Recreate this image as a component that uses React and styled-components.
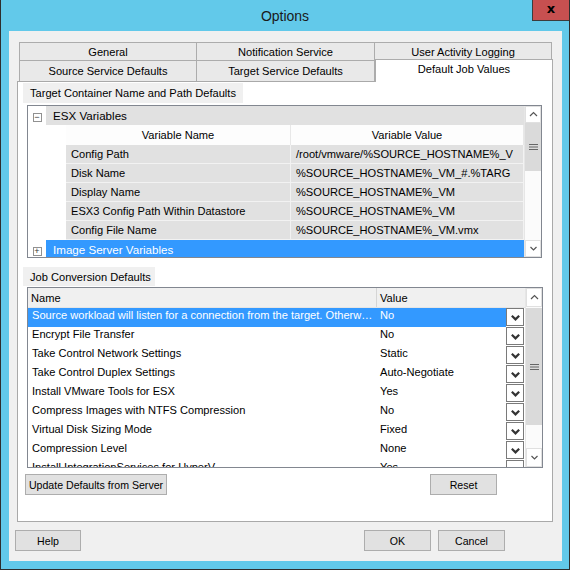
import React from "react";
import styled, { createGlobalStyle } from "styled-components";

const GlobalStyle = createGlobalStyle`
  body {
    margin: 0;
    font-family: "Liberation Sans", Arial, sans-serif;
    font-size: 11.1px;
    color: #000;
  }
  * {
    box-sizing: border-box;
  }
`;

const treeRows = [
  ["Config Path", "/root/vmware/%SOURCE_HOSTNAME%_V"],
  ["Disk Name", "%SOURCE_HOSTNAME%_VM_#.%TARG"],
  ["Display Name", "%SOURCE_HOSTNAME%_VM"],
  ["ESX3 Config Path Within Datastore", "%SOURCE_HOSTNAME%_VM"],
  ["Config File Name", "%SOURCE_HOSTNAME%_VM.vmx"],
];

const jobRows = [
  ["Source workload will listen for a connection from the target. Otherwise the target will connect", "No", true],
  ["Encrypt File Transfer", "No"],
  ["Take Control Network Settings", "Static"],
  ["Take Control Duplex Settings", "Auto-Negotiate"],
  ["Install VMware Tools for ESX", "Yes"],
  ["Compress Images with NTFS Compression", "No"],
  ["Virtual Disk Sizing Mode", "Fixed"],
  ["Compression Level", "None"],
  ["Install IntegrationServices for HyperV", "Yes"],
];

const Chevron = ({ up, size = 9, heavy }) => (
  <svg width={size} height={size} viewBox="0 0 9 9">
    <polyline
      points={up ? "1,6 4.5,2.5 8,6" : "1.5,3 4.5,6 7.5,3"}
      fill="none"
      stroke={heavy ? "#333" : "#555"}
      strokeWidth={heavy ? "1.8" : "1.2"}
    />
  </svg>
);

const Grip = () => (
  <svg width="9" height="8" viewBox="0 0 9 8">
    <path d="M0 1.5h9M0 4h9M0 6.5h9" stroke="#666" strokeWidth="1.2" />
  </svg>
);

function ScrollBar({ arrow, thumbTop, thumb }) {
  return (
    <Scroll>
      <ArrowBox h={arrow}>
        <Chevron up />
      </ArrowBox>
      <Thumb style={{ marginTop: thumbTop, height: thumb }}>
        <Grip />
      </Thumb>
      <Track />
      <ArrowBox h={arrow}>
        <Chevron />
      </ArrowBox>
    </Scroll>
  );
}

function App() {
  return (
    <>
      <GlobalStyle />
      <Window>
        <TitleBar>
          <Title>Options</Title>
          <CloseButton>x</CloseButton>
        </TitleBar>
        <Client>
          <TabArea>
            <TabRow>
              <Tab first>General</Tab>
              <Tab>Notification Service</Tab>
              <Tab>User Activity Logging</Tab>
            </TabRow>
            <TabRow lower>
              <Tab first lower>Source Service Defaults</Tab>
              <Tab lower>Target Service Defaults</Tab>
              <ActiveTab>Default Job Values</ActiveTab>
            </TabRow>
            <Panel>
              <GroupLabel w={220}>Target Container Name and Path Defaults</GroupLabel>
              <TreeGrid>
                <TreeBody>
                  <GroupRow>
                    <Expander>
                      <ExpandBox>−</ExpandBox>
                    </Expander>
                    <GroupBar>ESX Variables</GroupBar>
                  </GroupRow>
                  <VarTable>
                    <VarHeader>
                      <VarHeadCell w={225}>Variable Name</VarHeadCell>
                      <VarHeadCell>Variable Value</VarHeadCell>
                    </VarHeader>
                    {treeRows.map(([name, value]) => (
                      <VarRow key={name}>
                        <VarCell w={225}>{name}</VarCell>
                        <VarCell>{value}</VarCell>
                      </VarRow>
                    ))}
                  </VarTable>
                  <GroupRow>
                    <Expander>
                      <ExpandBox>+</ExpandBox>
                    </Expander>
                    <GroupBar selected>Image Server Variables</GroupBar>
                  </GroupRow>
                </TreeBody>
                <ScrollBar arrow={17} thumbTop={0} thumb={48} />
              </TreeGrid>

              <GroupLabel w={132} spaced>Job Conversion Defaults</GroupLabel>
              <JobGrid>
                <JobBody>
                  <JobHeader>
                    <JobHeadCell w={349}>Name</JobHeadCell>
                    <JobHeadCell>Value</JobHeadCell>
                  </JobHeader>
                  <JobRows>
                    {jobRows.map(([name, value, selected]) => (
                      <JobRow key={name} selected={selected}>
                        <NameCell>{name}</NameCell>
                        <ValueCell>{value}</ValueCell>
                        <DropButton>
                          <Chevron size={11} heavy />
                        </DropButton>
                      </JobRow>
                    ))}
                  </JobRows>
                </JobBody>
                <ScrollBar arrow={19} thumbTop={1} thumb={117} />
              </JobGrid>

              <PanelButtons>
                <Button w={142}>Update Defaults from Server</Button>
                <Button w={67}>Reset</Button>
              </PanelButtons>
            </Panel>
          </TabArea>
          <Footer>
            <Button w={66}>Help</Button>
            <ButtonGroup>
              <Button w={67}>OK</Button>
              <Button w={67}>Cancel</Button>
            </ButtonGroup>
          </Footer>
        </Client>
      </Window>
    </>
  );
}

const Window = styled.div`
  width: 570px;
  height: 570px;
  background: #62c9ea;
  border: 1px solid #2e2e2e;
  border-top: none;
  display: flex;
  flex-direction: column;
`;
const TitleBar = styled.div`
  height: 31px;
  display: grid;
  grid-template-columns: 1fr auto 1fr;
  align-items: start;
`;
const Title = styled.div`
  grid-column: 2;
  font-size: 14px;
  line-height: 32px;
  color: #1a1a1a;
`;
const CloseButton = styled.div`
  grid-column: 3;
  justify-self: end;
  width: 37px;
  height: 21px;
  background: #c75050;
  border: 1px solid #3c3c3c;
  border-top: none;
  border-right: none;
  text-align: center;
  font-family: "DejaVu Sans", sans-serif;
  font-weight: bold;
  font-size: 13px;
  line-height: 18px;
  color: #000;
`;
const Client = styled.div`
  margin: 0 7px 0 8px;
  height: 530px;
  background: #f0f0f0;
  padding-top: 11px;
  display: flex;
  flex-direction: column;
`;
const TabArea = styled.div`
  margin-left: 8px;
  width: 536px;
  display: flex;
  flex-direction: column;
`;
const TabRow = styled.div`
  display: grid;
  grid-template-columns: 178px 178px 177px;
  margin-left: 2px;
  height: ${(p) => (p.lower ? "20px" : "19px")};
`;
const Tab = styled.div`
  background: #e9e9e9;
  border: 1px solid #acacac;
  border-left: ${(p) => (p.first ? "1px solid #acacac" : "none")};
  border-bottom: ${(p) => (p.lower ? "none" : "1px solid #acacac")};
  border-top: ${(p) => (p.lower ? "none" : "1px solid #acacac")};
  display: flex;
  align-items: center;
  justify-content: center;
  white-space: nowrap;
`;
const ActiveTab = styled.div`
  position: relative;
  z-index: 2;
  margin: -2px -1px -1px 0;
  background: #fff;
  border: 1px solid #acacac;
  border-bottom: none;
  display: flex;
  justify-content: center;
  padding-top: 3px;
`;
const Panel = styled.div`
  width: 536px;
  height: 441px;
  background: #fff;
  border: 1px solid #a9a9a9;
  display: flex;
  flex-direction: column;
`;
const GroupLabel = styled.div`
  margin: ${(p) => (p.spaced ? "9px" : "1px")} 0 0 5px;
  width: ${(p) => p.w}px;
  height: ${(p) => (p.spaced ? "19px" : "20px")};
  background: #f0f0f0;
  padding-left: 7px;
  display: flex;
  align-items: center;
  white-space: nowrap;
`;
const TreeGrid = styled.div`
  margin: 2px 0 0 9px;
  width: 515px;
  height: 153px;
  border: 1px solid #828790;
  display: flex;
  overflow: hidden;
`;
const TreeBody = styled.div`
  flex: 1;
  display: flex;
  flex-direction: column;
  overflow: hidden;
`;
const GroupRow = styled.div`
  display: flex;
  height: 19px;
  flex: none;
`;
const Expander = styled.div`
  width: 18px;
  display: flex;
  align-items: center;
  justify-content: center;
`;
const ExpandBox = styled.div`
  width: 9px;
  height: 9px;
  border: 1px solid #919191;
  font-size: 9px;
  line-height: 6px;
  text-align: center;
  color: #333;
  margin-top: 4px;
`;
const GroupBar = styled.div`
  flex: 1;
  background: ${(p) => (p.selected ? "#3399ff" : "#e1e1e1")};
  color: ${(p) => (p.selected ? "#fff" : "#000")};
  padding-left: 7px;
  font-size: 11.6px;
  display: flex;
  align-items: center;
`;
const VarTable = styled.div`
  margin-left: 38px;
  display: flex;
  flex-direction: column;
`;
const VarHeader = styled.div`
  display: flex;
  height: 20px;
  background: #fdfdfd;
`;
const VarHeadCell = styled.div`
  width: ${(p) => (p.w ? `${p.w}px` : "auto")};
  flex: ${(p) => (p.w ? "none" : "1")};
  display: flex;
  align-items: center;
  justify-content: center;
  border-right: 1px solid #e8e8e8;
`;
const VarRow = styled.div`
  display: flex;
  height: 19px;
  background: #e1e1e1;
  border-bottom: 1px solid #f2f2f2;
`;
const VarCell = styled.div`
  width: ${(p) => (p.w ? `${p.w}px` : "auto")};
  flex: ${(p) => (p.w ? "none" : "1")};
  padding-left: 5px;
  display: flex;
  align-items: center;
  border-right: 1px solid #f2f2f2;
  white-space: nowrap;
  overflow: hidden;
`;
const Scroll = styled.div`
  width: 17px;
  flex: none;
  display: flex;
  flex-direction: column;
  background: #fbfbfb;
  border-left: 1px solid #e6e6e6;
`;
const ArrowBox = styled.div`
  height: ${(p) => p.h}px;
  flex: none;
  background: #fff;
  border: 1px solid #e0e0e0;
  display: flex;
  align-items: center;
  justify-content: center;
`;
const Thumb = styled.div`
  flex: none;
  background: #dadada;
  display: flex;
  align-items: center;
  justify-content: center;
`;
const Track = styled.div`
  flex: 1;
`;
const JobGrid = styled.div`
  margin: 1px 0 0 9px;
  width: 516px;
  height: 181px;
  border: 1px solid #828790;
  display: flex;
  overflow: hidden;
`;
const JobBody = styled.div`
  flex: 1;
  display: flex;
  flex-direction: column;
  overflow: hidden;
`;
const JobHeader = styled.div`
  display: flex;
  height: 20px;
  flex: none;
  background: #f0f0f0;
  border-bottom: 1px solid #e5e5e5;
`;
const JobHeadCell = styled.div`
  width: ${(p) => (p.w ? `${p.w}px` : "auto")};
  flex: ${(p) => (p.w ? "none" : "1")};
  padding-left: 3px;
  display: flex;
  align-items: center;
  border-right: ${(p) => (p.w ? "1px solid #d5d5d5" : "none")};
`;
const JobRows = styled.div`
  flex: 1;
  overflow: hidden;
`;
const JobRow = styled.div`
  display: flex;
  height: 19px;
  align-items: stretch;
  background: #fff;
  & > div:not(:last-child) {
    background: ${(p) => (p.selected ? "#3399ff" : "transparent")};
    color: ${(p) => (p.selected ? "#fff" : "#000")};
  }
`;
const NameCell = styled.div`
  width: 349px;
  flex: none;
  padding: 0 3px 0 4px;
  white-space: nowrap;
  overflow: hidden;
  text-overflow: ellipsis;
  line-height: 15px;
`;
const ValueCell = styled.div`
  flex: 1;
  padding-left: 3px;
  line-height: 15px;
`;
const DropButton = styled.div`
  width: 18px;
  height: 18px;
  margin-right: 1px;
  border: 1px solid #7a7a7a;
  background: #fff;
  display: flex;
  align-items: center;
  justify-content: center;
`;
const PanelButtons = styled.div`
  margin: 6px 55px 0 7px;
  display: flex;
  justify-content: space-between;
`;
const Button = styled.div`
  width: ${(p) => p.w}px;
  height: 21px;
  background: #e1e1e1;
  border: 1px solid #adadad;
  font-size: 10.6px;
  display: flex;
  align-items: center;
  justify-content: center;
  white-space: nowrap;
`;
const Footer = styled.div`
  margin: 8px 57px 0 6px;
  display: flex;
  justify-content: space-between;
`;
const ButtonGroup = styled.div`
  display: flex;
  gap: 7px;
`;

export default App;
